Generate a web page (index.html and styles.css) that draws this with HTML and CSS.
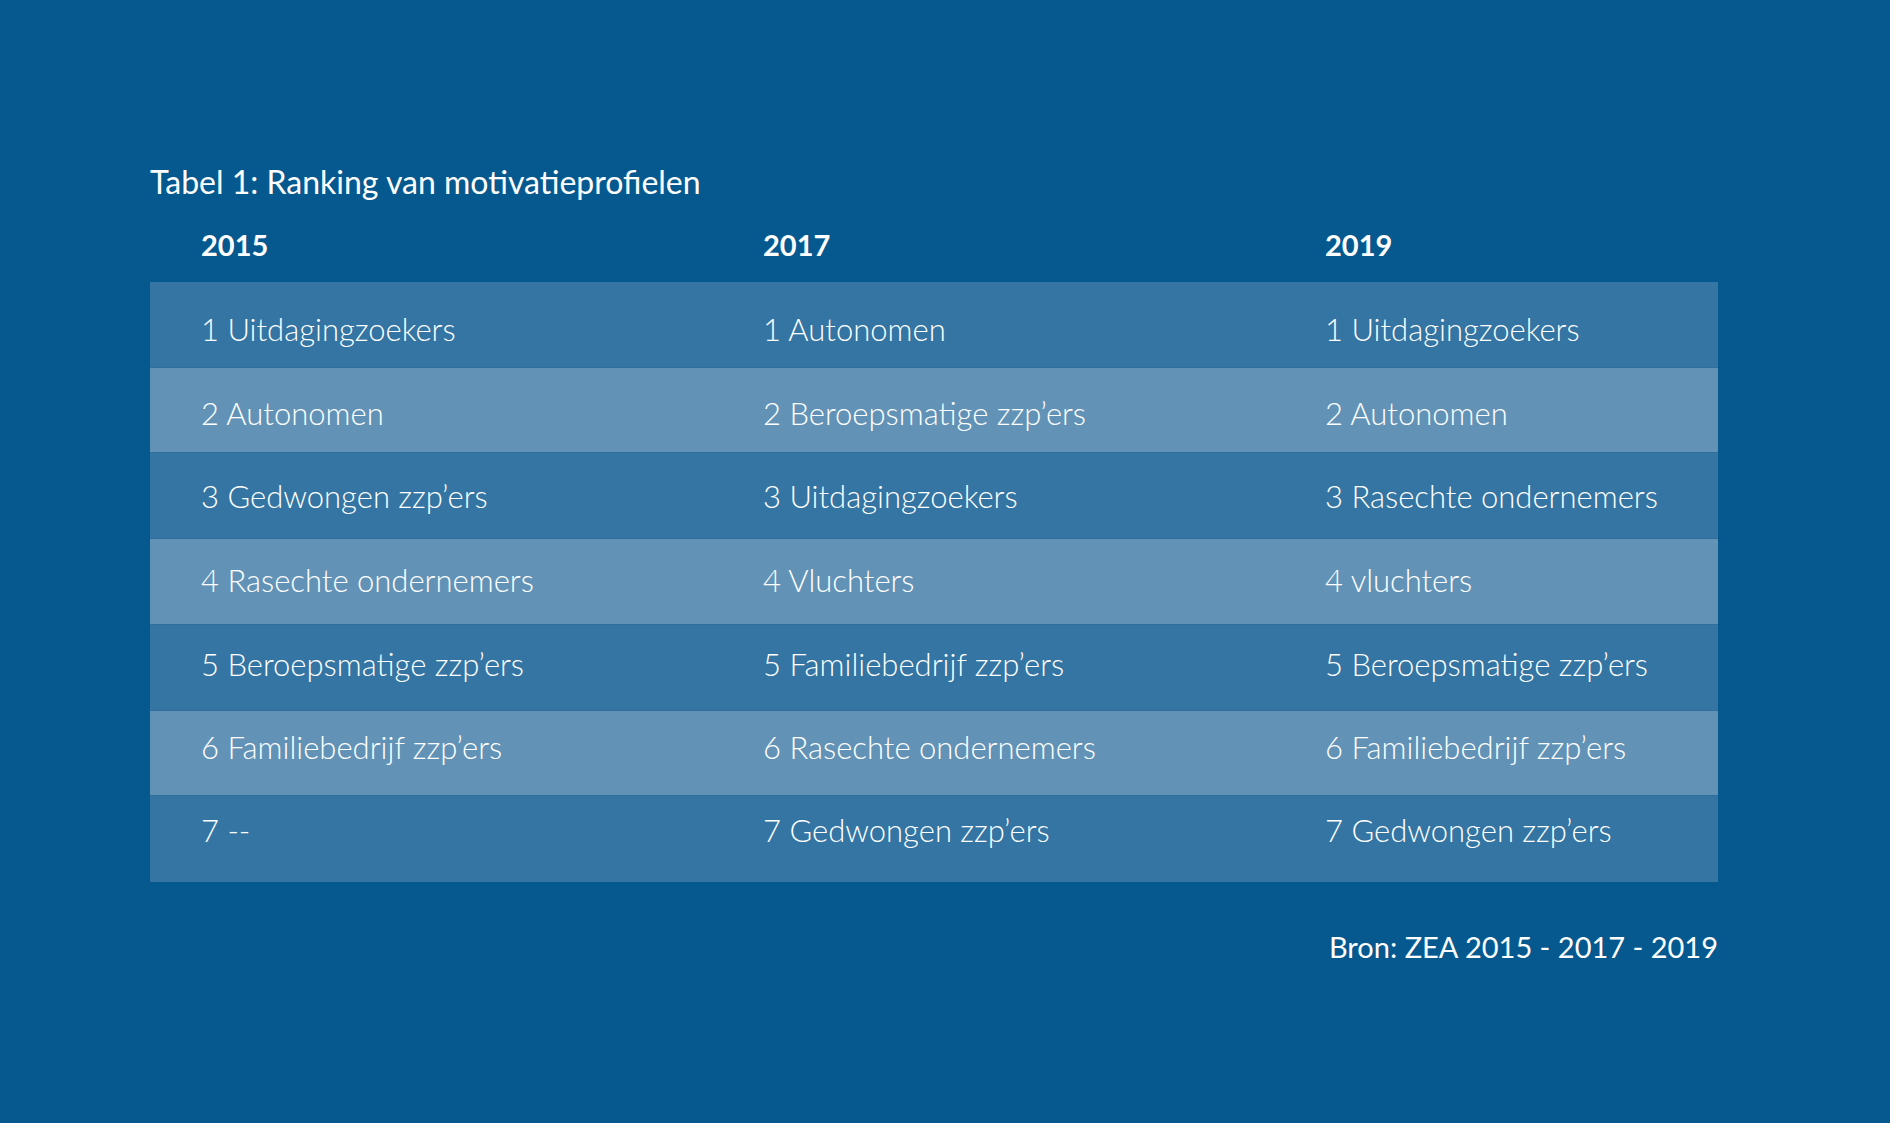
FILE: index.html
```html
<!DOCTYPE html>
<html lang="nl">
<head>
<meta charset="utf-8">
<title>Tabel 1: Ranking van motivatieprofielen</title>
<link rel="stylesheet" href="styles.css">
</head>
<body>
<main class="page">
  <h1 class="title">Tabel 1: Ranking van motivatieprofielen</h1>
  <div class="head">
    <div class="cell">2015</div>
    <div class="cell">2017</div>
    <div class="cell">2019</div>
  </div>
  <div class="table">
    <div class="row dark"><div class="cell">1 Uitdagingzoekers</div><div class="cell">1 Autonomen</div><div class="cell">1 Uitdagingzoekers</div></div>
    <div class="row light"><div class="cell">2 Autonomen</div><div class="cell">2 Beroepsmatige zzp’ers</div><div class="cell">2 Autonomen</div></div>
    <div class="row dark"><div class="cell">3 Gedwongen zzp’ers</div><div class="cell">3 Uitdagingzoekers</div><div class="cell">3 Rasechte ondernemers</div></div>
    <div class="row light"><div class="cell">4 Rasechte ondernemers</div><div class="cell">4 Vluchters</div><div class="cell">4 vluchters</div></div>
    <div class="row dark"><div class="cell">5 Beroepsmatige zzp’ers</div><div class="cell">5 Familiebedrijf zzp’ers</div><div class="cell">5 Beroepsmatige zzp’ers</div></div>
    <div class="row light"><div class="cell">6 Familiebedrijf zzp’ers</div><div class="cell">6 Rasechte ondernemers</div><div class="cell">6 Familiebedrijf zzp’ers</div></div>
    <div class="row dark last"><div class="cell">7 --</div><div class="cell">7 Gedwongen zzp’ers</div><div class="cell">7 Gedwongen zzp’ers</div></div>
  </div>
  <p class="source">Bron: ZEA 2015 - 2017 - 2019</p>
</main>
</body>
</html>
```
FILE: styles.css
```css
html, body {
  margin: 0;
  padding: 0;
  background: #05598f;
}
body {
  width: 1890px;
  height: 1123px;
  overflow: hidden;
  font-family: Lato, "Open Sans", "Liberation Sans", sans-serif;
  color: #ffffff;
}
.page {
  width: 1568px;
  padding: 164px 0 0 150px;
}
.title {
  margin: 0;
  font-size: 32px;
  line-height: 36px;
  font-weight: 400;
}
.head {
  display: grid;
  grid-template-columns: 562px 562px 1fr;
  margin-top: 24px;
  height: 58px;
}
.head .cell {
  padding-left: 51px;
  padding-top: 3px;
  font-size: 29px;
  line-height: 36px;
  font-weight: 700;
}
.table {
  display: flex;
  flex-direction: column;
}
.row {
  display: grid;
  grid-template-columns: 562px 562px 1fr;
  height: 85.714px;
  box-sizing: border-box;
  border-bottom: 1px solid #2f6d9a;
  align-items: start;
}
.row.last { border-bottom: none; }
.row.dark { background: #3475a3; }
.row.light { background: #6293b7; }
.row .cell {
  padding-left: 51px;
  font-size: 31px;
  line-height: 36px;
  font-weight: 300;
}
.row:nth-child(1) .cell { padding-top: 29px; }
.row:nth-child(2) .cell { padding-top: 27px; }
.row:nth-child(3) .cell { padding-top: 25px; }
.row:nth-child(4) .cell { padding-top: 23px; }
.row:nth-child(5) .cell { padding-top: 21px; }
.row:nth-child(6) .cell { padding-top: 18px; }
.row:nth-child(7) .cell { padding-top: 16px; }
.source {
  margin: 47px 0 0 0;
  text-align: right;
  font-size: 29px;
  line-height: 36px;
  font-weight: 400;
}
```
